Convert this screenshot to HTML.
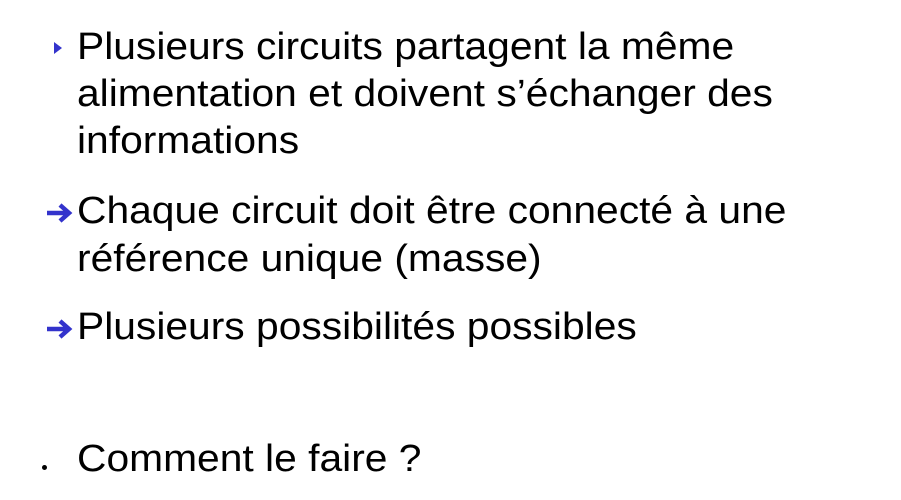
<!DOCTYPE html><html><head><style>
body{margin:0;width:901px;height:500px;background:#fff;overflow:hidden;font-family:"Liberation Sans",Arial,sans-serif;color:#000}
.l{position:absolute;left:77px;font-size:38px;line-height:47px;white-space:nowrap;transform:scaleX(1.073);transform-origin:0 0}
.i{position:absolute}
</style></head><body>
<svg class="i" style="left:52px;top:40px" width="12" height="16"><polygon points="2,2 10,8 2,14" fill="#3333cc"/></svg>
<div class="l" style="top:24px">Plusieurs circuits partagent la même</div>
<div class="l" style="top:71px">alimentation et doivent s’échanger des</div>
<div class="l" style="top:118px">informations</div>
<svg class="i" style="left:45px;top:202px" width="30" height="22"><path d="M2 11H24M15 3L24 11L15 19" stroke="#3333cc" stroke-width="4.5" fill="none"/></svg>
<div class="l" style="top:188px">Chaque circuit doit être connecté à une</div>
<div class="l" style="top:236px">référence unique (masse)</div>
<svg class="i" style="left:45px;top:318px" width="30" height="22"><path d="M2 11H24M15 3L24 11L15 19" stroke="#3333cc" stroke-width="4.5" fill="none"/></svg>
<div class="l" style="top:304px">Plusieurs possibilités possibles</div>
<div class="i" style="left:42px;top:465px;width:5px;height:5px;background:#000;border-radius:50%"></div>
<div class="l" style="top:436px">Comment le faire ?</div>
</body></html>
